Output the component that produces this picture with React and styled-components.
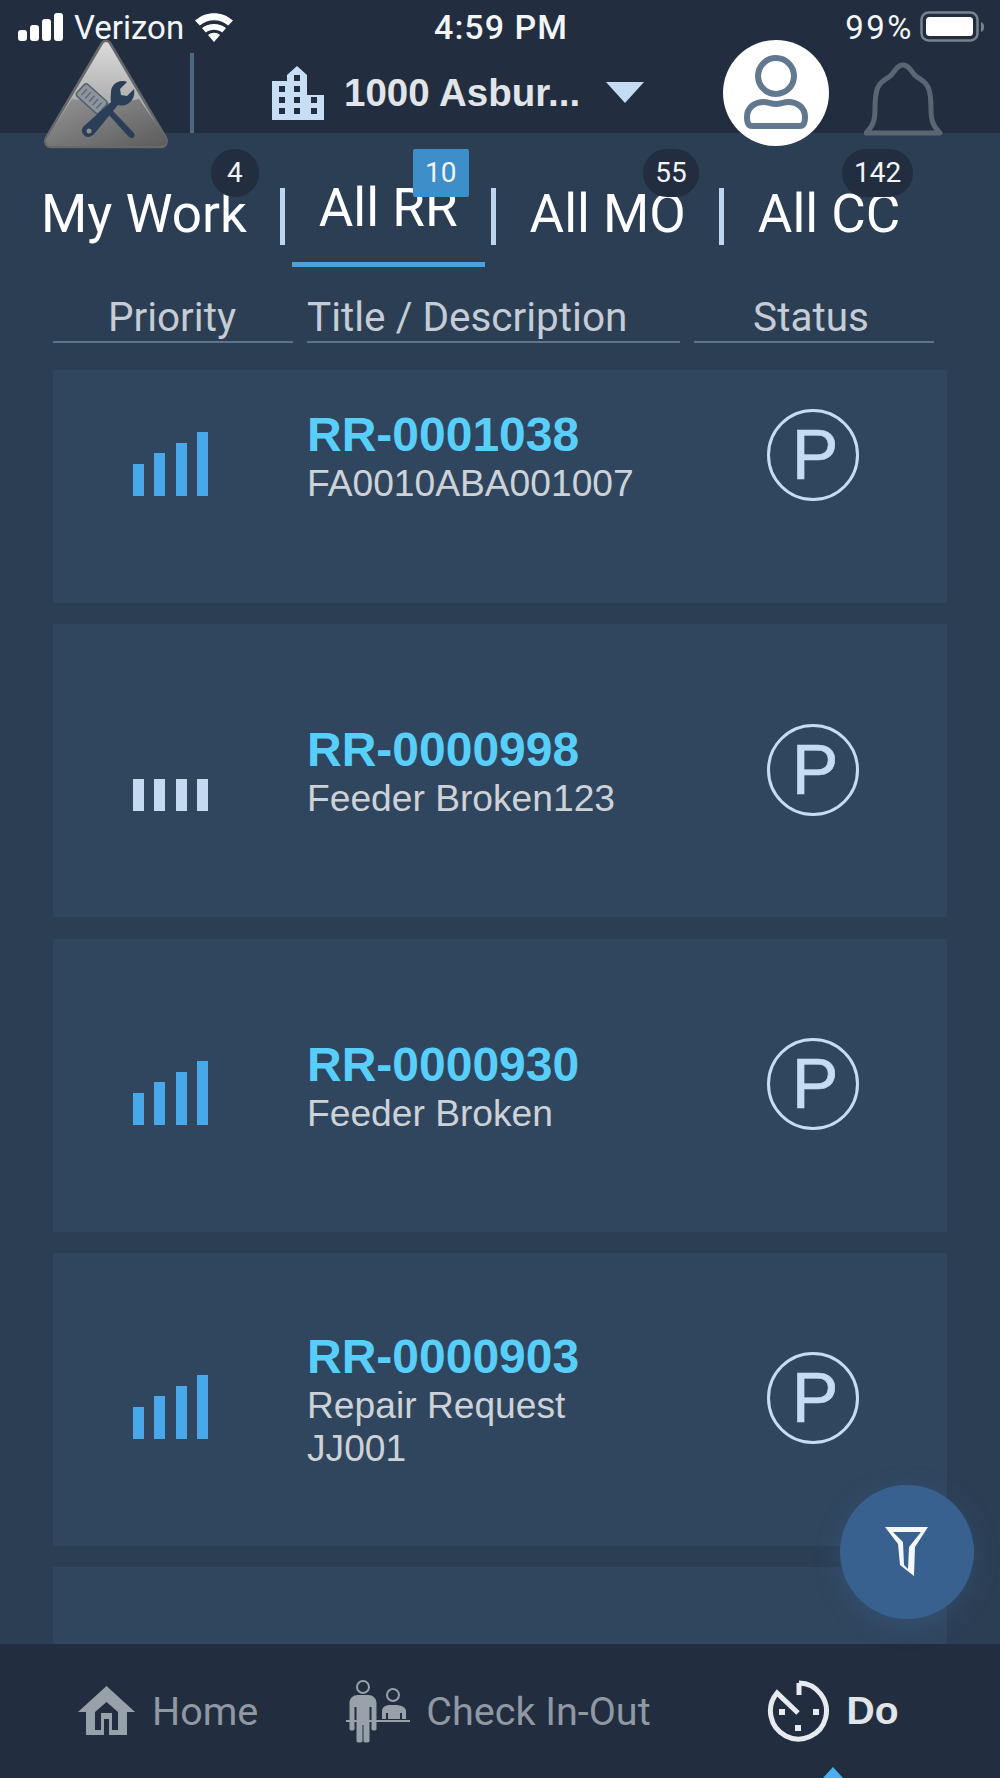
import { createGlobalStyle, styled } from "styled-components";

const GlobalStyle = createGlobalStyle`
  html, body {
    margin: 0;
    padding: 0;
    background: #2c3e54;
  }
  * {
    box-sizing: border-box;
  }
`;

const Screen = styled.div`
  position: relative;
  width: 1000px;
  height: 1778px;
  display: flex;
  flex-direction: column;
  overflow: hidden;
  background: #2c3e54;
  font-family: Roboto, sans-serif;
`;

const Top = styled.header`
  position: relative;
  flex: none;
  height: 133px;
  background: #222e3f;
`;

const StatusBar = styled.div`
  height: 52px;
  padding: 2px 16px 0 18px;
  display: grid;
  grid-template-columns: 1fr auto 1fr;
  align-items: center;
  color: #f3f5f7;
  font-size: 33px;
`;

const StatusLeft = styled.div`
  display: flex;
  align-items: center;
  gap: 10px;
`;

const StatusRight = styled.div`
  display: flex;
  align-items: center;
  justify-content: flex-end;
  gap: 6px;
  letter-spacing: 2.5px;
`;

const Clock = styled.div`
  font-size: 34px;
  font-weight: 500;
  letter-spacing: 1px;
`;

const Nav = styled.div`
  height: 81px;
  display: flex;
  align-items: flex-end;
`;

const LogoWrap = styled.div`
  position: absolute;
  left: 42px;
  top: 36px;
  z-index: 3;
  line-height: 0;
`;

const Divider = styled.div`
  width: 4px;
  height: 80px;
  margin-left: 190px;
  background: #4f6880;
`;

const Site = styled.div`
  height: 80px;
  margin-left: 78px;
  display: flex;
  align-items: center;
  color: #e1e4e8;
  font: bold 38.5px "Liberation Sans", Arial, sans-serif;
`;

const SiteName = styled.span`
  width: 236px;
  margin-left: 20px;
  white-space: nowrap;
`;

const Caret = styled.span`
  width: 0;
  height: 0;
  margin-left: 26px;
  margin-top: -2px;
  border-left: 19px solid transparent;
  border-right: 19px solid transparent;
  border-top: 21px solid #c5dcf5;
`;

const Avatar = styled.div`
  position: absolute;
  left: 723px;
  top: 40px;
  z-index: 3;
  width: 106px;
  height: 106px;
  border-radius: 50%;
  background: #fff;
  display: flex;
  align-items: center;
  justify-content: center;
`;

const BellWrap = styled.div`
  position: absolute;
  left: 864px;
  top: 62px;
  line-height: 0;
`;

const Main = styled.main`
  flex: 1;
  min-height: 0;
  overflow: hidden;
`;

const Tabs = styled.nav`
  height: 133px;
  padding: 16px 0 0 14px;
  display: flex;
  align-items: flex-start;
`;

const Tab = styled.div`
  position: relative;
  height: 118px;
  padding: ${(p) => (p.$active ? "27px" : "33px")} 27px 0;
  margin: 0 6px 0 7px;
  color: #fff;
  font-size: 53px;
  line-height: 64px;
  white-space: nowrap;
  border-bottom: 5px solid ${(p) => (p.$active ? "#4aa0e0" : "transparent")};

  &:first-child {
    margin-left: 0;
  }
`;

const Sep = styled.div`
  flex: none;
  width: 5px;
  height: 57px;
  margin-top: 39px;
  background: #bcd6f2;
`;

const Badge = styled.span`
  position: absolute;
  top: 0;
  right: ${(p) => p.$right}px;
  z-index: 2;
  min-width: 48px;
  height: 48px;
  padding: 0 12px;
  border-radius: ${(p) => (p.$square ? "2px" : "24px")};
  background: ${(p) => (p.$square ? "#3d8ec9" : "#222e3f")};
  color: #f2f4f6;
  font-size: 28px;
  line-height: 48px;
  text-align: center;
`;

const Columns = styled.div`
  margin: 16px 67px 0 53px;
  display: grid;
  grid-template-columns: 240px 373px 240px;
  column-gap: 14px;
`;

const ColumnHead = styled.div`
  height: 61px;
  padding: 12px ${(p) => p.$inset || 0}px 0 0;
  border-bottom: 2px solid #5d748e;
  color: #c4ccd6;
  font-size: 40.5px;
  line-height: 47px;
  white-space: nowrap;
  text-align: ${(p) => (p.$left ? "left" : "center")};
`;

const List = styled.div`
  margin: 27px 53px 0;
  display: flex;
  flex-direction: column;
  gap: 21.3px;
`;

const Card = styled.article`
  flex: none;
  height: ${(p) => (p.$short ? 233 : 293)}px;
  padding: 0 88px ${(p) => (p.$short ? 62 : 0)}px 80px;
  display: grid;
  grid-template-columns: 174px 1fr 92px;
  align-items: center;
  background: #30465e;
`;

const Bars = styled.div`
  display: flex;
  align-items: flex-end;
  gap: 10.4px;
  height: 64px;
  margin-top: 16px;
`;

const Bar = styled.span`
  width: 11px;
  background: ${(p) => p.$color};
`;

const Info = styled.div`
  font-family: "Liberation Sans", Arial, sans-serif;
  margin-top: 2px;
`;

const Code = styled.div`
  color: #58cffb;
  font-size: 48px;
  font-weight: bold;
  line-height: 54px;
`;

const Desc = styled.div`
  color: #cdd2d8;
  font-size: 37.2px;
  line-height: 43px;
`;

const StatusCircle = styled.div`
  width: 92px;
  height: 92px;
  margin-top: -2px;
  padding: 3px 0 0 4px;
  border: 3.5px solid #c5dcf5;
  border-radius: 50%;
  color: #c5dcf5;
  font: 70px/80px "Liberation Sans", Arial, sans-serif;
  -webkit-text-stroke: 0.6px #c5dcf5;
  text-align: center;
`;

const Fab = styled.button`
  position: absolute;
  left: 840px;
  top: 1485px;
  z-index: 4;
  width: 134px;
  height: 134px;
  padding: 0;
  border: 0;
  border-radius: 50%;
  background: #386190;
  box-shadow: 0 6px 26px rgba(60, 110, 170, 0.28);
  display: flex;
  align-items: center;
  justify-content: center;
`;

const Footer = styled.footer`
  position: relative;
  flex: none;
  height: 134px;
  background: #222e3f;
  display: flex;
  align-items: center;
  color: #8f98a3;
  font-size: 39.5px;
`;

const FootItem = styled.div`
  display: flex;
  align-items: center;
  gap: ${(p) => p.$gap}px;
  margin-left: ${(p) => p.$left}px;
`;

const DoLabel = styled.span`
  color: #e1e5ea;
  font: bold 39px "Liberation Sans", Arial, sans-serif;
`;

const Pointer = styled.span`
  position: absolute;
  left: 823px;
  bottom: 0;
  width: 0;
  height: 0;
  border-left: 10px solid transparent;
  border-right: 10px solid transparent;
  border-bottom: 11px solid #4ab0f0;
`;

const SignalIcon = () => (
  <svg width="46" height="28" viewBox="0 0 46 28" fill="#fff">
    <rect x="0" y="17" width="9" height="11" rx="3" />
    <rect x="12" y="12" width="9" height="16" rx="3" />
    <rect x="24" y="6" width="9" height="22" rx="3" />
    <rect x="36" y="0" width="9" height="28" rx="3" />
  </svg>
);

const WifiIcon = () => (
  <svg width="40" height="30" viewBox="0 0 40 30" fill="#fff">
    <path d="M20 30l-6-7c3.600-3 8.400-3 12 0z" />
    <path d="M11.800 20.500l-3.800-4.400c7-5.600 17-5.600 24 0l-3.800 4.400c-4.800-3.800-11.600-3.800-16.400 0z" />
    <path d="M5.800 13.500L1 8.500c11-9.800 27-9.800 38 0l-4.800 5c-8.400-7-20-7-28.400 0z" />
  </svg>
);

const BatteryIcon = () => (
  <svg width="64" height="32" viewBox="0 0 64 32">
    <rect x="1.500" y="1.500" width="56" height="28" rx="7" fill="none" stroke="#79838f" strokeWidth="2.500" />
    <rect x="6" y="6" width="47" height="19" rx="3.500" fill="#fff" />
    <path d="M61 11c2 .6 3 2.400 3 5s-1 4.400-3 5z" fill="#79838f" />
  </svg>
);

const Logo = () => (
  <svg width="128" height="114" viewBox="0 0 128 114">
    <defs>
      <linearGradient id="logoTop" x1="0" y1="0" x2="0" y2="1">
        <stop offset="0" stopColor="#dcdcdc" />
        <stop offset="0.55" stopColor="#b0b0b0" />
        <stop offset="1" stopColor="#a0a0a0" />
      </linearGradient>
      <linearGradient id="logoBottom" x1="0" y1="0" x2="1" y2="1">
        <stop offset="0" stopColor="#949494" />
        <stop offset="1" stopColor="#5c5c5c" />
      </linearGradient>
    </defs>
    <path d="M60 7c2-3 6-3 8 0l56 95c2 4 0 9-5 9H9c-5 0-7-5-5-9z" fill="url(#logoTop)" stroke="#66696c" strokeWidth="2.500" strokeLinejoin="round" />
    <path d="M30 63c12 1 24 4 34 4 13 0 24-2 33-4l27 39c2 4 0 8-5 8H9c-4 0-6-4-4-8z" fill="url(#logoBottom)" />
    <path d="M66 78l4-4 21 22c2 2 2 4 1 5-2 2-3 1-5 0z" fill="#2a3f57" />
    <g transform="rotate(42 49 62)">
      <rect x="35" y="54" width="30" height="16" rx="3" fill="#8d949c" stroke="#52606f" strokeWidth="1.500" />
      <path d="M40 58v8M45 58v8M50 58v8M55 58v8M60 58v8" stroke="#5d6a78" strokeWidth="1.500" />
    </g>
    <path d="M69 56c0-6 5-11 11-11 2 0 4 0 5 1l-7 7 1 6 6 1 7-7c1 7-1 11-5 14-4 3-8 3-11 2L53 97c-3 4-8 5-10 3-4-3-4-7-1-10l27-24c-1-3 0-7 0-10z" fill="#2a3f57" />
    <circle cx="47" cy="95" r="2.500" fill="#8d8d8d" />
  </svg>
);

const BuildingIcon = () => (
  <svg width="52" height="54" viewBox="0 0 52 54">
    <path d="M0 15h15V9l10-9 10 9v20h17v25H0z" fill="#c8def4" />
    <g fill="#222e3f">
      <rect x="7" y="20" width="6" height="6" />
      <rect x="7" y="31" width="6" height="6" />
      <rect x="7" y="42" width="6" height="6" />
      <rect x="22" y="9" width="6" height="6" />
      <rect x="22" y="20" width="6" height="6" />
      <rect x="22" y="31" width="6" height="6" />
      <rect x="22" y="42" width="6" height="6" />
      <rect x="39" y="31" width="6" height="6" />
      <rect x="39" y="42" width="6" height="6" />
    </g>
  </svg>
);

const PersonIcon = () => (
  <svg width="68" height="76" viewBox="0 0 68 76" fill="none" stroke="#62788f" strokeWidth="6">
    <circle cx="34" cy="21" r="18" />
    <path d="M5 62c0-9 7-15 17-15 4 0 7 2 12 2s8-2 12-2c10 0 17 6 17 15 0 6-2 9-5 9H10c-3 0-5-3-5-9z" strokeLinejoin="round" />
  </svg>
);

const BellIcon = () => (
  <svg width="80" height="74" viewBox="0 0 80 74" fill="none" stroke="#5b6673" strokeWidth="5">
    <path d="M2 71c8-8 9-14 9-24 0-21 3-26 14-32 6-4 7-12 14-12s8 8 14 12c11 6 14 11 14 32 0 10 1 16 9 24z" strokeLinejoin="round" />
  </svg>
);

const FilterIcon = () => (
  <svg width="44" height="50" viewBox="0 0 44 50">
    <path fillRule="evenodd" fill="#f4f6f8" d="M0 0H43L30 20 29 49 15 38 13 17zM8 5L18 15 19 38 23 42 24 20 36 5z" />
  </svg>
);

const HomeIcon = () => (
  <svg width="58" height="50" viewBox="0 0 58 50">
    <path d="M28.500 0L57 26H49V49H31V33H26V49H8V26H0z" fill="#98a0aa" />
    <path d="M17 44V26L28.500 16 40 26V44H34V27H23V44z" fill="#222e3f" />
  </svg>
);

const CheckInIcon = () => (
  <svg width="66" height="64" viewBox="0 0 66 64">
    <circle cx="17" cy="8" r="6" fill="none" stroke="#98a0aa" strokeWidth="2" />
    <path d="M3.500 24c0-5 4-8 8-8h11c4 0 8 3 8 8v26c0 2-5 2-5 0V28h-2v34c0 2-6 2-6 0V46h-1v16c0 2-6 2-6 0V28h-2v22c0 2-5 2-5 0z" fill="#98a0aa" />
    <circle cx="47" cy="16" r="6" fill="none" stroke="#98a0aa" strokeWidth="2" />
    <path d="M36 40v-8c0-4 4-6 8-6h6c4 0 10 2 10 6v8h-4v-6h-2v6H42v-6h-2v6z" fill="#98a0aa" />
    <rect x="0" y="41" width="64" height="2" fill="#98a0aa" />
  </svg>
);

const TimerIcon = () => (
  <svg width="64" height="64" viewBox="0 0 64 64" fill="none" stroke="#e7eaee" strokeWidth="5">
    <path d="M33 4a28 28 0 1 1-22 10l21 20" strokeLinecap="butt" />
    <path d="M33 4v12" />
    <g fill="#e7eaee" stroke="none">
      <rect x="13" y="30" width="6" height="6" />
      <rect x="47" y="30" width="6" height="6" />
      <rect x="29" y="46" width="6" height="6" />
    </g>
  </svg>
);

const PriorityBars = ({ flat }) => {
  const heights = flat ? [32, 32, 32, 32] : [32, 43, 53, 64];
  const color = flat ? "#c5d9ef" : "#49a8ea";
  return (
    <Bars>
      {heights.map((h, i) => (
        <Bar key={i} $color={color} style={{ height: h }} />
      ))}
    </Bars>
  );
};

const requests = [
  { code: "RR-0001038", lines: ["FA0010ABA001007"], short: true },
  { code: "RR-0000998", lines: ["Feeder Broken123"], flat: true },
  { code: "RR-0000930", lines: ["Feeder Broken"] },
  { code: "RR-0000903", lines: ["Repair Request", "JJ001"] },
];

const App = () => {
  return (
    <Screen>
      <GlobalStyle />
      <Top>
        <StatusBar>
          <StatusLeft>
            <SignalIcon />
            <span>Verizon</span>
            <WifiIcon />
          </StatusLeft>
          <Clock>4:59 PM</Clock>
          <StatusRight>
            <span>99%</span>
            <BatteryIcon />
          </StatusRight>
        </StatusBar>
        <Nav>
          <Divider />
          <Site>
            <BuildingIcon />
            <SiteName>1000 Asbur...</SiteName>
            <Caret />
          </Site>
        </Nav>
        <LogoWrap>
          <Logo />
        </LogoWrap>
        <Avatar>
          <PersonIcon />
        </Avatar>
        <BellWrap>
          <BellIcon />
        </BellWrap>
      </Top>

      <Main>
        <Tabs>
          <Tab>
            My Work
            <Badge $right={15}>4</Badge>
          </Tab>
          <Sep />
          <Tab $active>
            All RR
            <Badge $square $right={16}>10</Badge>
          </Tab>
          <Sep />
          <Tab>
            All MO
            <Badge $right={14}>55</Badge>
          </Tab>
          <Sep />
          <Tab>
            All CC
            <Badge $right={14}>142</Badge>
          </Tab>
        </Tabs>
        <Columns>
          <ColumnHead $inset={2}>Priority</ColumnHead>
          <ColumnHead $left>Title / Description</ColumnHead>
          <ColumnHead $inset={6}>Status</ColumnHead>
        </Columns>
        <List>
          {requests.map((r) => (
            <Card key={r.code} $short={r.short}>
              <PriorityBars flat={r.flat} />
              <Info>
                <Code>{r.code}</Code>
                {r.lines.map((line) => (
                  <Desc key={line}>{line}</Desc>
                ))}
              </Info>
              <StatusCircle>P</StatusCircle>
            </Card>
          ))}
          <Card />
        </List>
      </Main>

      <Fab>
        <FilterIcon />
      </Fab>

      <Footer>
        <FootItem $left={78} $gap={16}>
          <HomeIcon />
          <span>Home</span>
        </FootItem>
        <FootItem $left={88} $gap={14}>
          <CheckInIcon />
          <span>Check In-Out</span>
        </FootItem>
        <FootItem $left={115} $gap={17}>
          <TimerIcon />
          <DoLabel>Do</DoLabel>
        </FootItem>
        <Pointer />
      </Footer>
    </Screen>
  );
};

export default App;
